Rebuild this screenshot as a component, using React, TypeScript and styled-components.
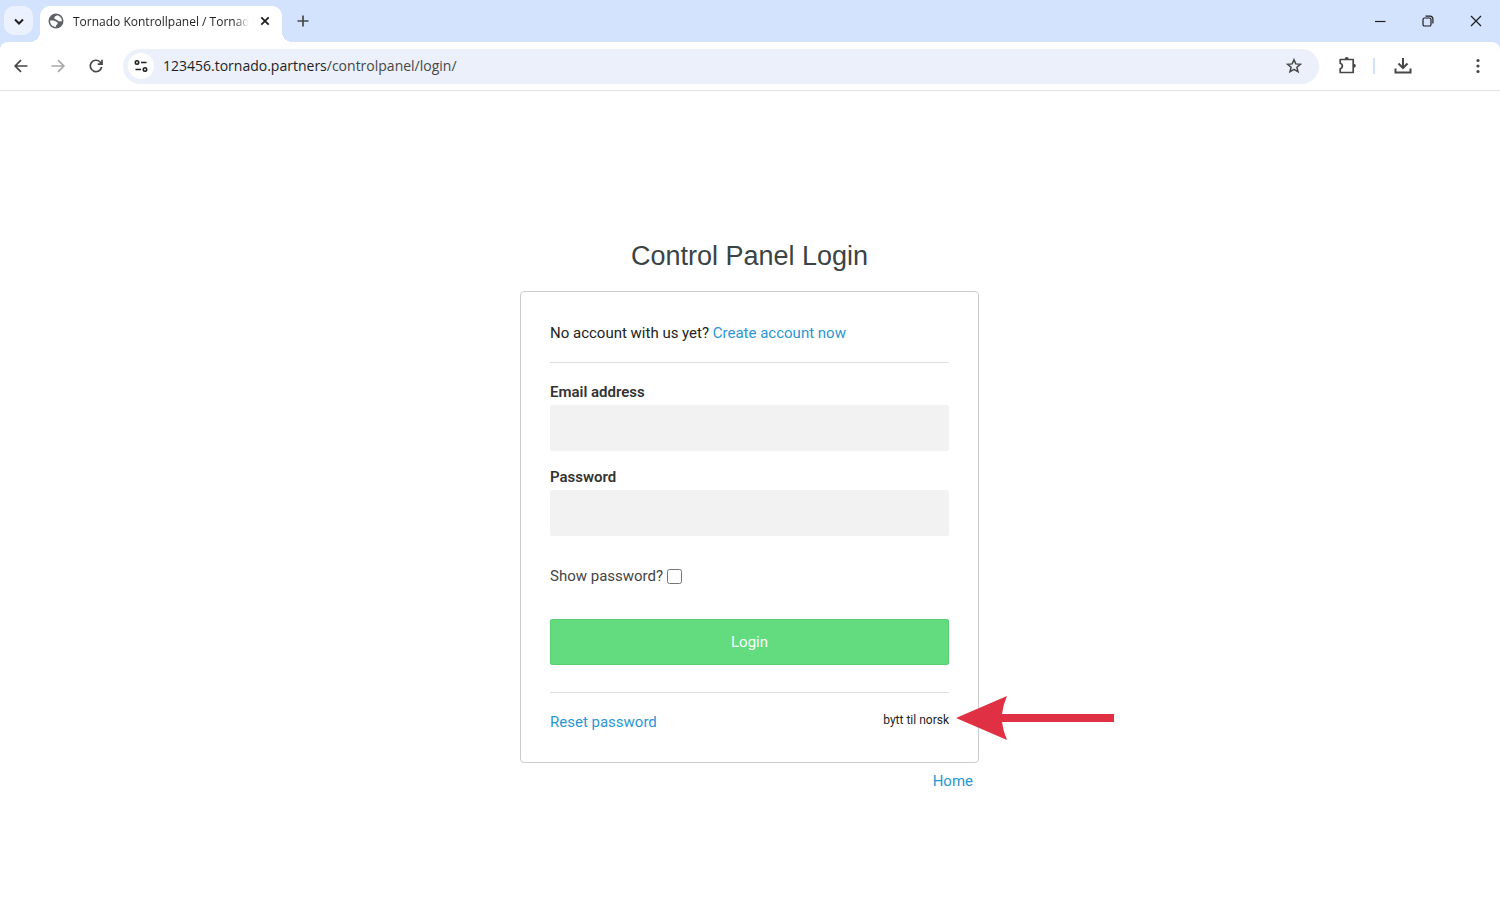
import React, { useState } from "react";
import styled, { createGlobalStyle } from "styled-components";

const GlobalStyle = createGlobalStyle`
  *, *::before, *::after { box-sizing: border-box; }
  body {
    margin: 0;
    background: #fff;
    color: #222;
    font-family: Roboto, "Liberation Sans", sans-serif;
    font-size: 15px;
    line-height: 24px;
  }
`;

const Chrome = styled.header`
  background: #d3e3fd;
  color: #1f1f1f;
  font-family: "Open Sans", "Noto Sans", sans-serif;
`;

const TabStrip = styled.div`
  display: flex;
  align-items: stretch;
  height: 42px;
  padding-left: 4px;
`;

const IconButton = styled.button<{ $size?: number; $color?: string }>`
  display: grid;
  place-items: center;
  flex: none;
  width: ${(p) => p.$size ?? 28}px;
  height: ${(p) => p.$size ?? 28}px;
  padding: 0;
  border: 0;
  border-radius: 50%;
  background: transparent;
  color: ${(p) => p.$color ?? "#474747"};
  svg { display: block; }
`;

const TabSearch = styled(IconButton)`
  width: 29px;
  height: 29px;
  margin: 6px 7px 0 0;
  border-radius: 10px;
  background: #ebf2fe;
  color: #1f1f1f;
`;

const Tab = styled.div`
  position: relative;
  display: flex;
  align-items: center;
  width: 242px;
  margin-top: 6px;
  padding: 0 7px 6px 8px;
  border-radius: 10px 10px 0 0;
  background: #fff;
  &::before, &::after {
    content: "";
    position: absolute;
    bottom: 0;
    width: 10px;
    height: 10px;
  }
  &::before {
    right: 100%;
    background: radial-gradient(circle at 0 0, transparent 10px, #fff 10px);
  }
  &::after {
    left: 100%;
    background: radial-gradient(circle at 100% 0, transparent 10px, #fff 10px);
  }
`;

const TabTitle = styled.span`
  flex: 1;
  margin: 2px 6px 0 9px;
  overflow: hidden;
  white-space: nowrap;
  font-size: 12px;
  line-height: 18px;
  mask-image: linear-gradient(to right, #000 92%, transparent 100%);
`;

const NewTab = styled(IconButton)`
  margin: 7px 0 0 7px;
`;

const WindowControls = styled.div`
  display: flex;
  align-items: center;
  margin-left: auto;
`;

const WindowButton = styled.button`
  display: grid;
  place-items: center;
  width: 48px;
  height: 42px;
  padding: 0;
  border: 0;
  background: transparent;
  color: #1f1f1f;
`;

const Toolbar = styled.div`
  display: flex;
  align-items: center;
  height: 49px;
  padding: 0 8px 0 7px;
  border-bottom: 1px solid #e0e0e0;
  border-radius: 8px 8px 0 0;
  background: #fff;
`;

const NavButtons = styled.div`
  display: flex;
  gap: 9px;
  padding-right: 14px;
`;

const AddressBar = styled.div`
  display: flex;
  flex: 1;
  align-items: center;
  height: 35px;
  padding: 0 11px 0 5px;
  border-radius: 18px;
  background: #ebf0fa;
`;

const SiteInfo = styled(IconButton)`
  background: #fff;
  color: #1f1f1f;
`;

const Address = styled.div`
  flex: 1;
  margin-left: 9px;
  color: #474747;
  font-size: 14px;
  line-height: 20px;
`;

const Host = styled.span`
  color: #1f1f1f;
`;

const Tools = styled.div`
  display: flex;
  align-items: center;
  padding-left: 14px;
`;

const ToolDivider = styled.span`
  width: 2px;
  height: 16px;
  margin: 0 14px 0 12px;
  background: #d3e3fd;
`;

const MenuButton = styled(IconButton)`
  margin-left: 47px;
`;

const Main = styled.main`
  max-width: 460px;
  margin: 0 auto;
  padding: 149px 1px 32px 0;
`;

const Title = styled.h1`
  margin: 0 0 19px;
  color: #3a4444;
  font-family: "Liberation Sans", Arial, sans-serif;
  font-size: 27px;
  font-weight: 400;
  line-height: 32px;
  text-align: center;
`;

const Card = styled.section`
  padding: 29px 29px 28px;
  border: 1px solid #ccc;
  border-radius: 4px;
`;

const Text = styled.p`
  margin: 0;
`;

const TextLink = styled.a`
  color: #2a96d3;
  text-decoration: none;
`;

const Rule = styled.hr`
  height: 1px;
  margin: 17px 0;
  border: 0;
  background: #ddd;
`;

const Field = styled.div`
  margin-bottom: 14px;
`;

const FieldLabel = styled.label`
  display: block;
  margin-bottom: 1px;
  color: #333;
  font-weight: 600;
`;

const FieldInput = styled.input`
  display: block;
  width: 100%;
  height: 46px;
  padding: 0 12px;
  border: 0;
  border-radius: 2px;
  background: #f2f2f2;
  font: inherit;
`;

const ShowPassword = styled.div`
  display: flex;
  align-items: center;
  gap: 4px;
  margin: 28px 0 31px;
  color: #444;
`;

const Checkbox = styled.input`
  width: 15px;
  height: 15px;
  margin: 1px 0 0;
`;

const LoginButton = styled.button`
  display: block;
  width: 100%;
  height: 46px;
  margin-bottom: 27px;
  border: 1px solid #55d173;
  border-radius: 2px;
  background: #62dc7e;
  color: #fff;
  font: inherit;
`;

const CardFooter = styled.div`
  position: relative;
  display: flex;
  justify-content: space-between;
`;

const LanguageLink = styled.a`
  color: #222;
  font-size: 12px;
  line-height: 20px;
  text-decoration: none;
`;

const Arrow = styled.svg`
  position: absolute;
  top: -15px;
  left: calc(100% + 6px);
`;

const HomeRow = styled.nav`
  padding: 6px 6px 0;
  text-align: right;
`;

type IconProps = { d: string; width?: number; size?: number };

const LineIcon = ({ d, width = 2, size = 20 }: IconProps) => (
  <svg width={size} height={size} viewBox={`0 0 ${size} ${size}`} fill="none" stroke="currentColor" strokeWidth={width} aria-hidden="true">
    <path d={d} />
  </svg>
);

const GlobeIcon = () => (
  <svg width="16" height="16" viewBox="0 0 16 16" aria-hidden="true">
    <circle cx="8" cy="8" r="7.5" fill="#5f6368" />
    <path d="M9.500 2.200C8 3 6.300 3.300 6.300 4.900c0 1.500 2.200 1.300 2.900 2.200.6.900 1.500 1.500 2.700 1.300.8-.1 1.300-.1 2 .2.300-2.900-1.500-5.500-4.400-6.400z" fill="#fff" />
    <path d="M2.100 7.600c1.700-.1 3.600-.3 4.900.5 1.200.8 2.700.9 2.700 2.100 0 1.300-1.800 1.400-2 3.700-3.200.1-5.900-2.900-5.600-6.300z" fill="#fff" />
  </svg>
);

const TuneIcon = () => (
  <svg width="16" height="16" viewBox="0 0 16 16" fill="none" stroke="currentColor" strokeWidth="1.6" aria-hidden="true">
    <circle cx="4" cy="4.5" r="1.7" />
    <path d="M8 4.500h5.500M2.500 11.500H8" />
    <circle cx="12" cy="11.5" r="1.7" />
  </svg>
);

const MoreIcon = () => (
  <svg width="20" height="20" viewBox="0 0 20 20" fill="currentColor" aria-hidden="true">
    <circle cx="10" cy="4.5" r="1.6" />
    <circle cx="10" cy="10" r="1.6" />
    <circle cx="10" cy="15.5" r="1.6" />
  </svg>
);

const RestoreIcon = () => (
  <svg width="12" height="12" viewBox="0 0 12 12" fill="none" stroke="currentColor" strokeWidth="1.2" aria-hidden="true">
    <rect x="1" y="3" width="8" height="8" rx="1.6" />
    <path d="M3.500 1.200h4.700a2.700 2.700 0 0 1 2.700 2.700v4.700" />
  </svg>
);

export default function App() {
  const [visible, setVisible] = useState(false);

  return (
    <>
      <GlobalStyle />
      <Chrome>
        <TabStrip>
          <TabSearch aria-label="Search tabs">
            <LineIcon d="M6 8.500l4 4 4-4" />
          </TabSearch>
          <Tab>
            <GlobeIcon />
            <TabTitle>Tornado Kontrollpanel / Tornado</TabTitle>
            <IconButton $size={20} $color="#1f1f1f" aria-label="Close tab">
              <LineIcon d="M6.300 6.300l7.400 7.400M13.700 6.300l-7.400 7.400" width={1.8} />
            </IconButton>
          </Tab>
          <NewTab aria-label="New tab">
            <LineIcon d="M10 4.500v11M4.500 10h11" width={1.7} />
          </NewTab>
          <WindowControls>
            <WindowButton aria-label="Minimize">
              <LineIcon size={12} d="M1 6.500h10.500" width={1.2} />
            </WindowButton>
            <WindowButton aria-label="Restore">
              <RestoreIcon />
            </WindowButton>
            <WindowButton aria-label="Close">
              <LineIcon size={12} d="M1 1l10 10M11 1L1 11" width={1.3} />
            </WindowButton>
          </WindowControls>
        </TabStrip>
        <Toolbar>
          <NavButtons>
            <IconButton aria-label="Back">
              <LineIcon d="M16.500 10H4.500M10 4.200L4.200 10l5.800 5.800" width={1.7} />
            </IconButton>
            <IconButton aria-label="Forward" $color="#a8a8a8">
              <LineIcon d="M3.500 10h12M10 4.200l5.800 5.800-5.800 5.800" width={1.7} />
            </IconButton>
            <IconButton aria-label="Reload">
              <LineIcon d="M16.600 11a5.700 5.700 0 1 1-1.500-5l1.800 1.900M17 3.800v4.300h-4.300" width={1.7} />
            </IconButton>
          </NavButtons>
          <AddressBar>
            <SiteInfo $size={26} aria-label="View site information">
              <TuneIcon />
            </SiteInfo>
            <Address>
              <Host>123456.tornado.partners</Host>/controlpanel/login/
            </Address>
            <IconButton aria-label="Bookmark this tab">
              <LineIcon d="M10 3.700l1.800 4.200 4.600.4-3.500 3 1.100 4.500-4-2.400-4 2.400 1.100-4.500-3.500-3 4.600-.4z" width={1.5} />
            </IconButton>
          </AddressBar>
          <Tools>
            <IconButton aria-label="Extensions">
              <svg width="20" height="20" viewBox="0 0 20 20" aria-hidden="true">
                <path d="M3.200 3.500h13v13h-13v-3.700a2.900 2.900 0 0 0 0-5.600z" fill="none" stroke="currentColor" strokeWidth="1.7" strokeLinejoin="round" />
                <path d="M7.700 3a2 2 0 0 1 4 0zM16.800 7.800a2 2 0 0 1 0 4z" fill="currentColor" />
              </svg>
            </IconButton>
            <ToolDivider />
            <IconButton aria-label="Downloads">
              <LineIcon d="M10 2v9.500M5.500 7.500L10 12l4.500-4.500M2.500 12.500v4h15v-4" />
            </IconButton>
            <MenuButton aria-label="Menu">
              <MoreIcon />
            </MenuButton>
          </Tools>
        </Toolbar>
      </Chrome>

      <Main>
        <Title>Control Panel Login</Title>
        <Card>
          <Text>
            No account with us yet? <TextLink href="#create">Create account now</TextLink>
          </Text>
          <Rule />
          <form onSubmit={(e) => e.preventDefault()}>
            <Field>
              <FieldLabel htmlFor="email">Email address</FieldLabel>
              <FieldInput id="email" type="email" />
            </Field>
            <Field>
              <FieldLabel htmlFor="password">Password</FieldLabel>
              <FieldInput id="password" type={visible ? "text" : "password"} />
            </Field>
            <ShowPassword>
              <label htmlFor="show">Show password?</label>
              <Checkbox id="show" type="checkbox" checked={visible} onChange={() => setVisible(!visible)} />
            </ShowPassword>
            <LoginButton type="submit">Login</LoginButton>
          </form>
          <Rule />
          <CardFooter>
            <TextLink href="#reset">Reset password</TextLink>
            <LanguageLink href="#norsk">bytt til norsk</LanguageLink>
            <Arrow width="160" height="46" viewBox="0 0 160 46" aria-hidden="true">
              <path d="M1 23L52 1Q48 10 47 19H159v8H47Q48 36 52 45z" fill="#df3143" />
            </Arrow>
          </CardFooter>
        </Card>
        <HomeRow>
          <TextLink href="#home">Home</TextLink>
        </HomeRow>
      </Main>
    </>
  );
}
